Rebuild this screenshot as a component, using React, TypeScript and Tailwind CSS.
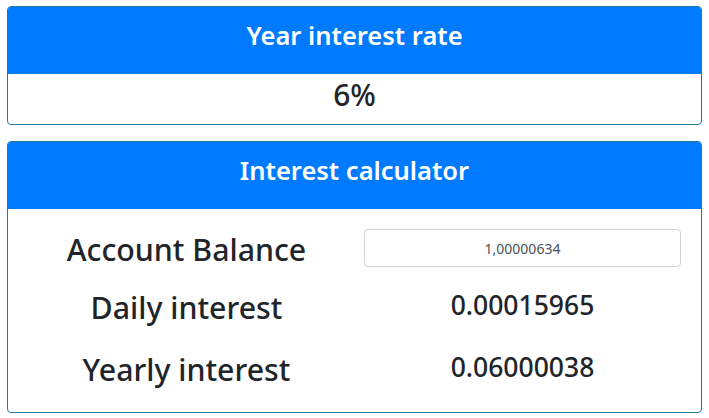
import React from "react";

export default function App() {
  const font = { fontFamily: '"Noto Sans", "Open Sans", sans-serif' };
  return (
    <div className="w-[709px] h-[418px] bg-white pt-[6px] px-[7px]" style={font}>
      <div className="rounded-[4px] border border-[#2379a0] overflow-hidden">
        <div className="h-[67px] bg-[#007bff] flex items-center justify-center pb-[9px]">
          <span className="text-white text-[25.5px] font-semibold leading-none">Year interest rate</span>
        </div>
        <div className="h-[50px] flex items-center justify-center pb-[8px]">
          <span className="text-[#212529] text-[30px] font-medium leading-none">6%</span>
        </div>
      </div>
      <div className="mt-[16px] rounded-[4px] border border-[#2379a0] overflow-hidden">
        <div className="h-[67px] bg-[#007bff] flex items-center justify-center pb-[9px]">
          <span className="text-white text-[25.5px] font-semibold leading-none">Interest calculator</span>
        </div>
        <div className="px-[20px] pt-[20px] pb-[22px] grid grid-cols-2 gap-x-[19px] items-center text-[#212529]">
          <div className="h-[38px] flex items-center justify-center text-[30.3px] font-medium pt-[3px]">Account Balance</div>
          <div className="h-[38px] rounded-[4px] border border-[#ced4da] flex items-center justify-center text-[14px] text-[#495057]">1,00000634</div>
          <div className="mt-[21px] h-[40px] flex items-center justify-center text-[30.3px] font-medium">Daily interest</div>
          <div className="mt-[21px] h-[40px] flex items-center justify-center text-[26.5px] font-medium pb-[4px]">0.00015965</div>
          <div className="mt-[22px] h-[40px] flex items-center justify-center text-[30.3px] font-medium">Yearly interest</div>
          <div className="mt-[22px] h-[40px] flex items-center justify-center text-[26.5px] font-medium pb-[4px]">0.06000038</div>
        </div>
      </div>
    </div>
  );
}
